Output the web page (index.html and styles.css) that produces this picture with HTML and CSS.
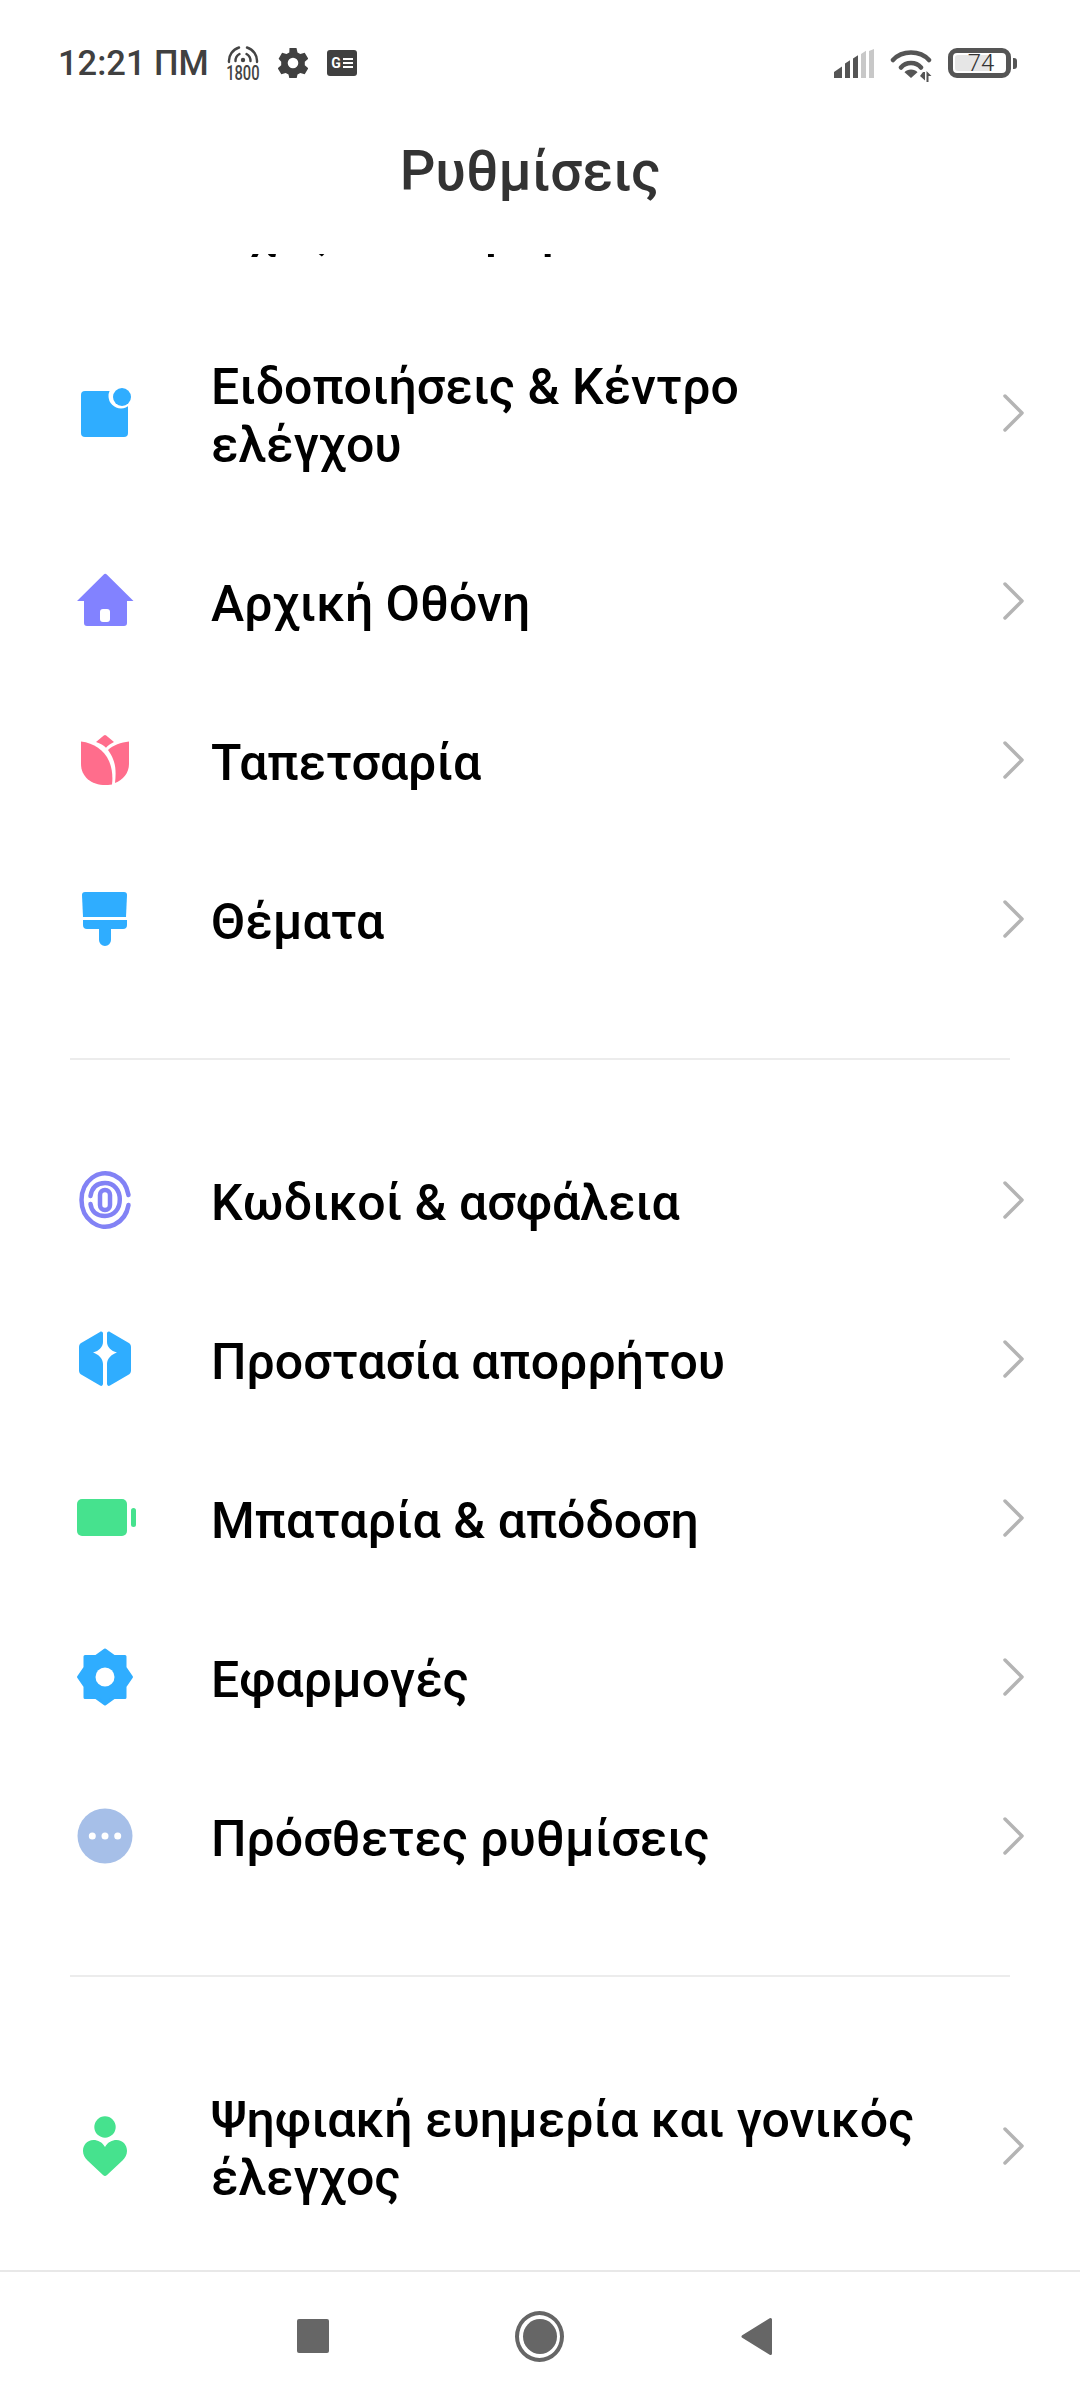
FILE: index.html
```html
<!DOCTYPE html>
<html lang="el">
<head>
    <meta charset="UTF-8">
    <meta name="viewport" content="width=device-width, initial-scale=1.0">
    <title>Ρυθμίσεις</title>
    <link rel="stylesheet" href="styles.css">
</head>
<body>
    <div class="phone">
        <div class="statusbar">
            <div class="status-left">
                <span class="clock">12:21 ΠΜ</span>
                <span class="hotspot">
                    <svg viewBox="0 0 32 20" width="32" height="20" fill="none" stroke="#444" stroke-width="2.400" stroke-linecap="round">
                        <circle cx="16" cy="15" r="2.200" fill="#444" stroke="none"/>
                        <path d="M2 17A14 14 0 0 1 12 2.500M30 17A14 14 0 0 0 20 2.500"/>
                        <path d="M8.500 16A8 8 0 0 1 12.500 9M23.500 16A8 8 0 0 0 19.500 9"/>
                    </svg>
                    <span class="hotspot-num">1800</span>
                </span>
                <svg viewBox="0 0 30 30" width="30" height="30" class="gear">
                    <path fill="#404040" fill-rule="evenodd" d="M11.500 0h7l1 4.500 2.800 1.600 4.400-1.400 3.500 6-3.400 3.100v3.400l3.400 3.100-3.500 6-4.400-1.400-2.800 1.600-1 4.500h-7l-1-4.500-2.800-1.600-4.400 1.400-3.500-6 3.400-3.100v-3.400L.6 10.700l3.500-6 4.400 1.400 2.800-1.600zM15 9.700a5.300 5.300 0 1 0 0 10.600 5.300 5.300 0 0 0 0-10.600z"/>
                </svg>
                <span class="news-icon">
                    <span class="news-g">G</span>
                    <span class="news-lines"><i></i><i></i><i></i></span>
                </span>
            </div>
            <div class="status-right">
                <svg viewBox="0 0 40 29" width="40" height="29">
                    <path fill="#555" d="M0 29v-6l8-5.500V29zM11 29V14.500l5-3.200V29zM19 29V9.500l5-3.200V29z"/>
                    <path fill="#c8c8c8" d="M27 29V5l5-3.200V29zM35 29V2l5-2v29z"/>
                </svg>
                <svg viewBox="0 0 44 34" width="44" height="34" class="wifi">
                    <path fill="none" stroke="#555" stroke-width="4.500" stroke-linecap="round" d="M3 11C12 1 30 1 39 11M11 18.500C16 12.500 26 12.500 31 18.500"/>
                    <path fill="#555" d="M21 20.500c2.700 0 5 1 6.500 2.700L21 29l-6.500-5.800c1.500-1.700 3.800-2.700 6.500-2.700z"/>
                    <path fill="#555" d="M33 24h2v8.500l-5-4.500zM36.500 23l5 5h-3v6h-2z" transform="translate(0 -1)"/>
                </svg>
                <span class="battery"><span class="battery-fill"></span><span class="battery-num">74</span></span>
                <span class="battery-tip"></span>
            </div>
        </div>

        <h1 class="page-title">Ρυθμίσεις</h1>

        <div class="list">
            <div class="group group-first">
                <div class="row row-clipped"><div class="row-icon"></div><div class="row-label">Ήχος &amp; δόνηση</div></div>
                <div class="row row-two">
                    <div class="row-icon">
                        <svg viewBox="0 0 60 60" width="60" height="60">
                            <rect x="6" y="8" width="47" height="46" rx="4" fill="#2fadff"/>
                            <circle cx="46" cy="13" r="12.500" fill="#fff"/>
                            <circle cx="47" cy="14" r="9" fill="#2fadff"/>
                        </svg>
                    </div>
                    <div class="row-label">Ειδοποιήσεις &amp; Κέντρο ελέγχου</div>
                    <svg class="chev" viewBox="0 0 24 40" width="24" height="40"><path d="M4 3l17 17L4 37" fill="none" stroke="#b4b4b4" stroke-width="3.500" stroke-linecap="round" stroke-linejoin="round"/></svg>
                </div>
                <div class="row">
                    <div class="row-icon">
                        <svg viewBox="0 0 60 60" width="60" height="60">
                            <path fill="#8282ff" d="M28.500 3.700a2.500 2.500 0 0 1 3.500 0L58.500 30H52v22a3 3 0 0 1-3 3H12a3 3 0 0 1-3-3V30H2z"/>
                            <rect x="25" y="38" width="10" height="13" rx="3" fill="#fff"/>
                        </svg>
                    </div>
                    <div class="row-label">Αρχική Οθόνη</div>
                    <svg class="chev" viewBox="0 0 24 40" width="24" height="40"><path d="M4 3l17 17L4 37" fill="none" stroke="#b4b4b4" stroke-width="3.500" stroke-linecap="round" stroke-linejoin="round"/></svg>
                </div>
                <div class="row">
                    <div class="row-icon">
                        <svg viewBox="0 0 60 60" width="60" height="60">
                            <path fill="#ff6d8c" d="M28.800 5.500a2 2 0 0 1 2.400 0L39 12c-3 1.500-6 3.500-8 5.700-2.500-2.500-5.500-4.300-10-5.700z"/>
                            <path fill="#ff6d8c" d="M6 11.500C19 13 29 20 34 31c3 7 4 15 3 23.500l-4 .5C17 56 6 47 6 34z"/>
                            <path fill="#ff6d8c" d="M54 11.500V34c0 9-6 16-14 19 1-9 1-17-2-24-1-3-3-6-5-9 5-5 13-7.500 21-8.500z"/>
                        </svg>
                    </div>
                    <div class="row-label">Ταπετσαρία</div>
                    <svg class="chev" viewBox="0 0 24 40" width="24" height="40"><path d="M4 3l17 17L4 37" fill="none" stroke="#b4b4b4" stroke-width="3.500" stroke-linecap="round" stroke-linejoin="round"/></svg>
                </div>
                <div class="row">
                    <div class="row-icon">
                        <svg viewBox="0 0 60 60" width="60" height="60">
                            <path fill="#2fadff" d="M7 6a3 3 0 0 1 3-3h39a3 3 0 0 1 3 3l-1 22H8z"/>
                            <path fill="#2fadff" d="M8 31h44v5a4 4 0 0 1-4 4H36v11a6 6 0 0 1-12 0V40H12a4 4 0 0 1-4-4z"/>
                        </svg>
                    </div>
                    <div class="row-label">Θέματα</div>
                    <svg class="chev" viewBox="0 0 24 40" width="24" height="40"><path d="M4 3l17 17L4 37" fill="none" stroke="#b4b4b4" stroke-width="3.500" stroke-linecap="round" stroke-linejoin="round"/></svg>
                </div>
            </div>

            <div class="group">
                <div class="row">
                    <div class="row-icon">
                        <svg viewBox="0 0 60 60" width="60" height="60" fill="none" stroke="#8282f5" stroke-width="4.500" stroke-linecap="round">
                            <path d="M53.500 25A23.700 26.700 0 1 0 53.500 35"/>
                            <path d="M15.500 26C17 17 22 13 30 13c9 0 14.800 7 14.800 16.500S39 46 30 46c-8 0-13.500-4-14.500-12"/>
                            <rect x="25" y="20" width="10" height="20" rx="5"/>
                        </svg>
                    </div>
                    <div class="row-label">Κωδικοί &amp; ασφάλεια</div>
                    <svg class="chev" viewBox="0 0 24 40" width="24" height="40"><path d="M4 3l17 17L4 37" fill="none" stroke="#b4b4b4" stroke-width="3.500" stroke-linecap="round" stroke-linejoin="round"/></svg>
                </div>
                <div class="row">
                    <div class="row-icon">
                        <svg viewBox="0 0 60 60" width="60" height="60">
                            <path fill="#2fadff" d="M28 4.500V13c0 5-4 9-10 10.500 5 1.500 10 6 10 11.500v19.500c0 2-1.500 3-3 2L7 46a5 5 0 0 1-3-4.500V18a5 5 0 0 1 3-4.500L25 3c1.500-1 3 0 3 1.500z"/>
                            <path fill="#2fadff" d="M32 4.500V13c0 5 4 9 10 10.500-5 1.500-10 6-10 11.500v19.500c0 2 1.500 3 3 2L53 46a5 5 0 0 0 3-4.500V18a5 5 0 0 0-3-4.500L35 3c-1.500-1-3 0-3 1.500z"/>
                        </svg>
                    </div>
                    <div class="row-label">Προστασία απορρήτου</div>
                    <svg class="chev" viewBox="0 0 24 40" width="24" height="40"><path d="M4 3l17 17L4 37" fill="none" stroke="#b4b4b4" stroke-width="3.500" stroke-linecap="round" stroke-linejoin="round"/></svg>
                </div>
                <div class="row">
                    <div class="row-icon">
                        <svg viewBox="0 0 60 60" width="60" height="60" class="icon-wide">
                            <rect x="2" y="11" width="50" height="37" rx="5" fill="#46e28e"/>
                            <rect x="56" y="20" width="5" height="19" rx="2.500" fill="#46e28e"/>
                        </svg>
                    </div>
                    <div class="row-label">Μπαταρία &amp; απόδοση</div>
                    <svg class="chev" viewBox="0 0 24 40" width="24" height="40"><path d="M4 3l17 17L4 37" fill="none" stroke="#b4b4b4" stroke-width="3.500" stroke-linecap="round" stroke-linejoin="round"/></svg>
                </div>
                <div class="row">
                    <div class="row-icon">
                        <svg viewBox="0 0 60 60" width="60" height="60">
                            <path fill="#2fadff" stroke="#2fadff" stroke-width="3" stroke-linejoin="round" d="M30 3l9 6.500h11v11L56.500 30 50 39.500v11H39L30 57l-9-6.500H10v-11L3.500 30 10 20.500v-11h11z"/>
                            <circle cx="30" cy="30" r="9.500" fill="#fff"/>
                        </svg>
                    </div>
                    <div class="row-label">Εφαρμογές</div>
                    <svg class="chev" viewBox="0 0 24 40" width="24" height="40"><path d="M4 3l17 17L4 37" fill="none" stroke="#b4b4b4" stroke-width="3.500" stroke-linecap="round" stroke-linejoin="round"/></svg>
                </div>
                <div class="row">
                    <div class="row-icon">
                        <svg viewBox="0 0 60 60" width="60" height="60">
                            <circle cx="30" cy="30" r="27.500" fill="#a6bfe8"/>
                            <circle cx="17.300" cy="30" r="3.500" fill="#fff"/>
                            <circle cx="30" cy="30" r="3.500" fill="#fff"/>
                            <circle cx="42.700" cy="30" r="3.500" fill="#fff"/>
                        </svg>
                    </div>
                    <div class="row-label">Πρόσθετες ρυθμίσεις</div>
                    <svg class="chev" viewBox="0 0 24 40" width="24" height="40"><path d="M4 3l17 17L4 37" fill="none" stroke="#b4b4b4" stroke-width="3.500" stroke-linecap="round" stroke-linejoin="round"/></svg>
                </div>
            </div>

            <div class="group">
                <div class="row row-two">
                    <div class="row-icon">
                        <svg viewBox="0 0 60 60" width="60" height="60">
                            <circle cx="30" cy="11" r="10.700" fill="#46e28e"/>
                            <path fill="#46e28e" d="M30 31c-3-5-7-7-11.500-7C12 24 8 29 8 35c0 4 2 7 4.500 9.500L28 59a3 3 0 0 0 4 0l15.500-14.500C50 42 52 39 52 35c0-6-4-11-10.500-11-4.500 0-8.500 2-11.500 7z"/>
                        </svg>
                    </div>
                    <div class="row-label">Ψηφιακή ευημερία και γονικός έλεγχος</div>
                    <svg class="chev" viewBox="0 0 24 40" width="24" height="40"><path d="M4 3l17 17L4 37" fill="none" stroke="#b4b4b4" stroke-width="3.500" stroke-linecap="round" stroke-linejoin="round"/></svg>
                </div>
            </div>
        </div>

        <div class="navbar">
            <span class="nav-square"></span>
            <span class="nav-home"><span class="nav-home-dot"></span></span>
            <svg viewBox="0 0 32 39" width="32" height="39"><path d="M2 19.500L29.500 2.500v34z" fill="#666" stroke="#666" stroke-width="3" stroke-linejoin="round"/></svg>
        </div>
    </div>
</body>
</html>
```

FILE: styles.css
```css
* {
    box-sizing: border-box;
}

html, body {
    margin: 0;
    background: #fff;
}

body {
    font-family: Roboto, "Noto Sans", sans-serif;
    color: #000;
}

.phone {
    width: 1080px;
    height: 2400px;
    display: flex;
    flex-direction: column;
    overflow: hidden;
}

/* status bar */
.statusbar {
    height: 118px;
    flex-shrink: 0;
    padding: 45px 63px 0 58px;
    display: flex;
    justify-content: space-between;
    align-items: flex-start;
    background: #fff;
}

.status-left, .status-right {
    display: flex;
    align-items: center;
    height: 36px;
}

.clock {
    width: 168px;
    font-size: 34.500px;
    font-weight: 500;
    color: #404040;
}

.hotspot {
    width: 34px;
    display: flex;
    flex-direction: column;
    align-items: center;
    margin-right: 18px;
}

.hotspot-num {
    font-size: 21px;
    line-height: 17px;
    font-weight: 500;
    color: #444;
    transform: scaleX(.7);
}

.gear {
    margin-right: 19px;
}

.news-icon {
    width: 30px;
    height: 26px;
    background: #404040;
    border-radius: 3px;
    display: flex;
    align-items: center;
    justify-content: center;
    gap: 2px;
}

.news-g {
    font-size: 14px;
    line-height: 14px;
    font-weight: 700;
    color: #fff;
}

.news-lines {
    display: flex;
    flex-direction: column;
    gap: 2px;
}

.news-lines i {
    display: block;
    width: 10px;
    height: 2px;
    background: #fff;
}

.status-right svg {
    margin-right: 16px;
}

.status-right .wifi {
    margin-top: 6px;
    margin-right: 14px;
}

.battery {
    width: 63px;
    height: 30px;
    border: 5px solid #555;
    border-radius: 9px;
    display: flex;
    align-items: center;
    justify-content: center;
    padding-left: 3px;
    position: relative;
}

.battery-fill {
    position: absolute;
    left: 2px;
    top: 2px;
    bottom: 2px;
    width: 37px;
    background: #e6e6e6;
    border-radius: 3px;
}

.battery-num {
    position: relative;
    font-size: 24px;
    line-height: 20px;
    font-weight: 300;
    color: #333;
}

.battery-tip {
    width: 4px;
    height: 11px;
    margin-left: 2px;
    background: #555;
    border-radius: 0 3px 3px 0;
}

/* title */
.page-title {
    height: 136px;
    flex-shrink: 0;
    margin: 0;
    padding-right: 20px;
    text-align: center;
    font-size: 56px;
    font-weight: 500;
    line-height: 106px;
    color: #333;
    background: #fff;
}

/* settings list */
.list {
    flex: 1;
    min-height: 0;
    overflow: hidden;
}

.group {
    padding: 60px 0;
    border-bottom: 2px solid #ececec;
    margin: 0 70px;
}

.group:last-child {
    border-bottom: 0;
}

.group-first {
    padding-top: 0;
}

.row {
    height: 159px;
    display: flex;
    align-items: center;
}

.row-two {
    height: 217px;
}

.row-clipped {
    margin-top: -109px;
}

.row-clipped .row-label {
    padding-top: 10px;
}

.row-icon {
    width: 60px;
    height: 60px;
    flex-shrink: 0;
    margin-left: 5px;
    margin-right: 76px;
}

.row-icon svg {
    display: block;
    overflow: visible;
}

.row-label {
    flex: 1;
    padding-top: 6px;
    font-size: 50px;
    font-weight: 500;
    line-height: 58px;
    color: #000;
    margin-right: 80px;
}

.chev {
    flex-shrink: 0;
    margin-right: -15px;
}

/* bottom navigation */
.navbar {
    height: 130px;
    flex-shrink: 0;
    border-top: 2px solid #e8e8e8;
    background: #fff;
    padding: 0 0 0 297px;
    display: flex;
    align-items: center;
}

.nav-square {
    width: 32px;
    height: 34px;
    background: #666;
    border-radius: 2px;
    margin-right: 186px;
}

.nav-home {
    width: 49px;
    height: 51px;
    border: 4px solid #666;
    border-radius: 50%;
    display: flex;
    align-items: center;
    justify-content: center;
    margin-right: 177px;
}

.nav-home-dot {
    width: 34px;
    height: 35px;
    background: #666;
    border-radius: 50%;
}
```
